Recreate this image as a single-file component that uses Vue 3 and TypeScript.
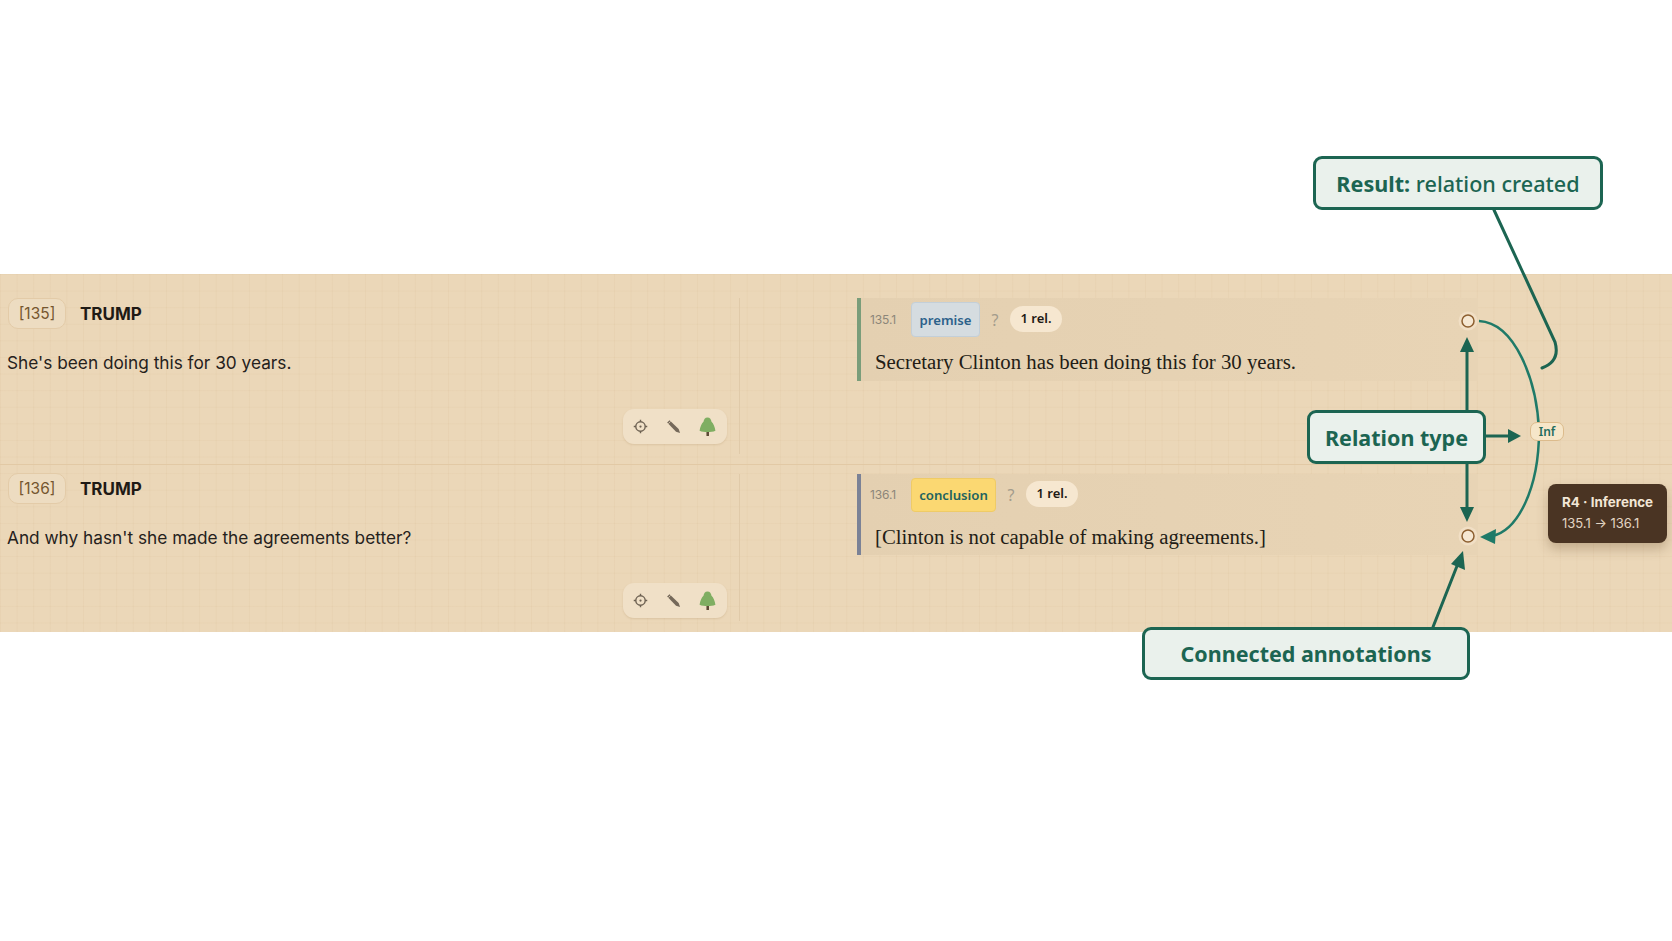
<script setup lang="ts">
interface Turn {
  id: number
  speaker: string
  text: string
  annId: string
  role: string
  gloss: string
  kind: 'first' | 'second'
}

const turns: Turn[] = [
  { id: 135, speaker: 'TRUMP', text: "She's been doing this for 30 years.", annId: '135.1', role: 'premise', gloss: 'Secretary Clinton has been doing this for 30 years.', kind: 'first' },
  { id: 136, speaker: 'TRUMP', text: "And why hasn't she made the agreements better?", annId: '136.1', role: 'conclusion', gloss: '[Clinton is not capable of making agreements.]', kind: 'second' }
]
</script>

<template>
  <div class="page">
    <section class="band">
      <article v-for="t in turns" :key="t.id" class="row" :class="t.kind">
        <div class="source">
          <header class="who">
            <span class="num">[{{ t.id }}]</span>
            <strong class="speaker">{{ t.speaker }}</strong>
          </header>
          <p class="said">{{ t.text }}</p>
          <div class="tools">
            <svg class="ico" viewBox="0 0 16 16" aria-hidden="true">
              <circle cx="8" cy="8" r="5" fill="none" stroke="#6d6152" stroke-width="1.5" />
              <circle cx="8" cy="8" r="1.2" fill="#6d6152" />
              <path d="M8 .8v2.400M8 12.800v2.400M.8 8h2.400M12.800 8h2.400" stroke="#6d6152" stroke-width="1.500" />
            </svg>
            <svg class="ico" viewBox="0 0 16 16" aria-hidden="true">
              <path d="M1.200 3.800 3.800 1.200l9.700 9.500L15 15l-4.300-1.500z" fill="#75695a" />
              <path d="M5 2.500 2.500 5" stroke="#efdcc2" stroke-width=".8" />
            </svg>
            <svg class="ico tree" viewBox="0 0 18 18" aria-hidden="true">
              <rect x="8" y="13" width="2.400" height="5" fill="#5c4a35" />
              <path d="M9 .5c2.400 0 3.500 2 3.800 4 1.800 1.500 3.200 5 3.700 8.500-2 1-4.900 1.300-7.500 1.300S3.500 14 1.500 13C2 9.500 3.400 6 5.200 4.500 5.500 2.500 6.600.5 9 .5z" fill="#7fae62" />
            </svg>
          </div>
        </div>
        <div class="analysis">
          <div class="ann">
            <div class="meta">
              <span class="aid">{{ t.annId }}</span>
              <span class="role">{{ t.role }}</span>
              <span class="q">?</span>
              <span class="rel">1 rel.</span>
            </div>
            <p class="gloss">{{ t.gloss }}</p>
          </div>
        </div>
      </article>
    </section>

    <svg class="wires" viewBox="0 0 1672 941" aria-hidden="true">
      <path class="rel-line" d="M1479 321C1515 323 1537 380 1539 431C1539 490 1517 531 1492 536" />
      <path class="rel-head" d="M1480 537 1496 529 1495 544z" />
      <path class="lead" d="M1494 210 1555 342C1559 356 1553 364 1542 368" />
      <path class="lead" d="M1467 410V350" />
      <path class="head" d="M1467 337 1474 352H1460z" />
      <path class="lead" d="M1467 464V508" />
      <path class="head" d="M1467 522 1460 507H1474z" />
      <path class="lead" d="M1486 436H1510" />
      <path class="head" d="M1521 436 1508 429V443z" />
      <path class="lead" d="M1433 627 1457 566" />
      <path class="head" d="M1463 551 1451 564 1465 570z" />
      <g v-for="y in [321, 536]" :key="y">
        <circle cx="1468" cy="321" r="9.500" fill="#f1dfc5" :transform="`translate(0 ${y - 321})`" />
        <circle cx="1468" cy="321" r="6" fill="#f6e8d3" stroke="#8d5f30" stroke-width="1.500" :transform="`translate(0 ${y - 321})`" />
      </g>
    </svg>

    <span class="inf">Inf</span>
    <div class="tip"><b>R4 · Inference</b><span>135.1 → 136.1</span></div>
    <div class="note n-result"><span><b>Result:</b> relation created</span></div>
    <div class="note n-type"><b>Relation type</b></div>
    <div class="note n-conn"><b>Connected annotations</b></div>
  </div>
</template>

<style>
html, body { margin: 0; background: #fff; }
</style>

<style scoped>
.page {
  position: relative;
  height: 941px;
  padding-top: 274px;
  box-sizing: border-box;
  overflow: hidden;
  background: #fff;
  font-family: Inter, "Liberation Sans", sans-serif;
}
.band {
  background-color: #ebd7b8;
  background-image:
    linear-gradient(to right, rgba(196, 158, 110, .08) 1px, transparent 1px),
    linear-gradient(to bottom, rgba(196, 158, 110, .07) 1px, transparent 1px);
  background-size: 16.6px 16.6px;
}
.row { display: flex; box-sizing: border-box; }
.row.first { height: 191px; padding: 24px 0 10px; border-bottom: 1px solid #e2c9a5; }
.row.second { height: 167px; padding: 9px 0 11px; }
.source {
  width: 740px;
  box-sizing: border-box;
  border-right: 1px solid #e0caa9;
  padding: 0 12px 10px 7px;
  display: flex;
  flex-direction: column;
}
.second .source { padding-top: 0; padding-bottom: 3px; }
.second .who { margin-top: -1px; }
.who { display: flex; align-items: center; gap: 14px; margin-left: 1px; }
.num {
  width: 58px;
  height: 31px;
  box-sizing: border-box;
  display: flex;
  align-items: center;
  justify-content: center;
  border: 1px solid #e3cba8;
  border-radius: 10px;
  background: #eddcc1;
  color: #75562f;
  font-size: 15.500px;
}
.speaker { font-size: 17px; font-weight: 700; color: #1f1a15; }
.said { margin: 22px 0 0; font-size: 17.250px; line-height: 24px; color: #25211c; }
.second .said { margin-top: 22px; }
.tools {
  margin-top: auto;
  align-self: flex-end;
  width: 104px;
  height: 35px;
  display: flex;
  align-items: center;
  justify-content: space-between;
  padding: 0 10px;
  box-sizing: border-box;
  border-radius: 11px;
  background: #f0e0c7;
  box-shadow: 0 1px 2px rgba(150, 110, 60, .18);
}
.second .tools { margin-bottom: 0; }
.ico { width: 15px; height: 15px; }
.tree { width: 19px; height: 19px; }
.analysis { flex: 1; padding-left: 117px; }
.ann {
  width: 621px;
  box-sizing: border-box;
  border-left: 4px solid #7a9d7a;
  background: linear-gradient(to right, #e4d0b1, #e8d4b5);
  padding: 4px 0 0 9px;
  height: 83px;
}
.second .ann { border-left-color: #7b8296; height: 81px; padding-top: 3px; }
.meta { display: flex; align-items: center; height: 35px; }
.aid { width: 41px; font-size: 12px; letter-spacing: -.1px; color: #8c8679; }
.role {
  height: 35px;
  box-sizing: border-box;
  display: flex;
  align-items: center;
  justify-content: center;
  width: 69px;
  border: 1px solid #c3cfd8;
  border-radius: 4px;
  background: #d5dce0;
  color: #2c618a;
  font: 600 13.200px "Noto Sans", sans-serif;
}
.second .role {
  width: 85px;
  height: 34px;
  border-color: #efcb66;
  background: #fbd872;
  color: #22635f;
}
.q { width: 30px; text-align: center; font: 400 16px "Noto Sans", sans-serif; color: #a39c8c; }
.rel {
  width: 52px;
  height: 26px;
  margin-top: -1px;
  border-radius: 13px;
  background: #f6e7d0;
  color: #1f1a15;
  font: 600 13px/25px "Noto Sans", sans-serif;
  text-align: center;
}
.gloss {
  margin: 12px 0 0 5px;
  font: 400 20.800px/26px "Liberation Serif", serif;
  color: #231d16;
  white-space: nowrap;
}
.second .gloss { margin-top: 12px; }
.wires { position: absolute; inset: 0; width: 1672px; height: 941px; pointer-events: none; }
.rel-line { fill: none; stroke: #1f7a68; stroke-width: 2.500; }
.rel-head { fill: #1f7a68; }
.lead { fill: none; stroke: #1c6552; stroke-width: 3; stroke-linecap: round; }
.head { fill: #1c6552; }
.inf {
  position: absolute;
  left: 1530px;
  top: 422px;
  width: 34px;
  height: 19px;
  box-sizing: border-box;
  border: 1px solid #dcbb8c;
  border-radius: 7px;
  background: #f6e6c9;
  color: #226c5e;
  font: 600 12px/17px "Noto Sans", sans-serif;
  text-align: center;
}
.tip {
  position: absolute;
  left: 1548px;
  top: 484px;
  width: 119px;
  height: 59px;
  box-sizing: border-box;
  padding: 10px 0 0 14px;
  border-radius: 8px;
  background: #4a3423;
  box-shadow: 0 6px 12px rgba(90, 60, 30, .28);
  color: #f2e6d6;
  display: flex;
  flex-direction: column;
  gap: 4px;
  line-height: 17px;
  white-space: nowrap;
}
.tip span { color: #e3d5c3; font-size: 13px; }
.tip b { font-weight: 700; font-size: 13.400px; }
.note {
  position: absolute;
  box-sizing: border-box;
  display: flex;
  align-items: center;
  justify-content: center;
  border: 3px solid #1c6552;
  border-radius: 9px;
  background: #eaf1ec;
  color: #1c6552;
  font-family: "Noto Sans", sans-serif;
  font-size: 21.500px;
  white-space: nowrap;
}
.note b { font-weight: 700; }
.n-result { left: 1313px; top: 156px; width: 290px; height: 54px; font-size: 21.600px; font-weight: 500; }
.n-type { left: 1307px; top: 410px; width: 179px; height: 54px; }
.n-conn { left: 1142px; top: 627px; width: 328px; height: 53px; }
</style>
